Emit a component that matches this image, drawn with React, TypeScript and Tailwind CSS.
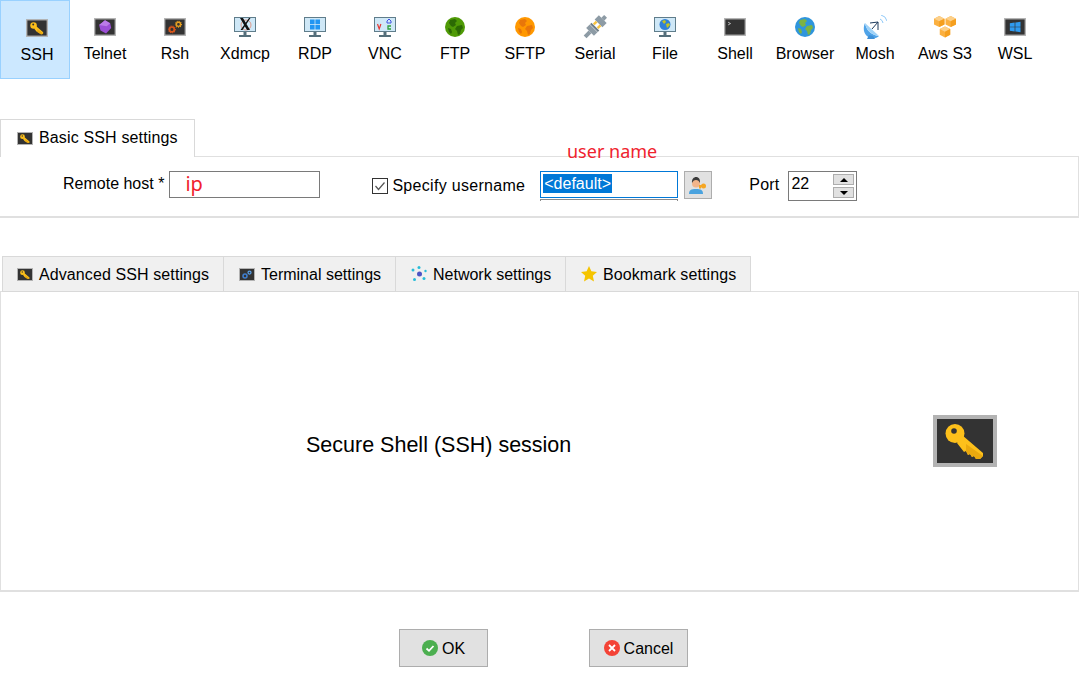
import type { ReactNode } from 'react';

type IconProps = { className?: string };

function DarkBox({ className, children }: IconProps & { children: ReactNode }) {
  return (
    <svg viewBox="0 0 64 52" className={className}>
      <rect x="2" y="2" width="60" height="48" fill="#333333" stroke="#b3b3b3" strokeWidth="4" />
      {children}
    </svg>
  );
}

function KeyIcon({ className }: IconProps) {
  return (
    <DarkBox className={className}>
      <circle cx="22" cy="18.500" r="9.500" fill="#fdc01b" />
      <path d="M29 20l21 18v3l-3 3h-4l-2-3-2 1-2-3-2 1-2-4-2 1-7-9z" fill="#fdc01b" />
      <path d="M33 29l17 12-3 3h-4l-2-3-2 1-2-3-2 1-2-4z" fill="#eaa90f" />
      <circle cx="21" cy="16" r="2.800" fill="#333333" />
    </DarkBox>
  );
}

function Monitor({ children }: { children?: ReactNode }) {
  return (
    <svg viewBox="0 0 22 20" className="w-[22px] h-[20px]">
      <rect x="0" y="0" width="22" height="15" fill="#607d8b" />
      <rect x="1" y="1" width="20" height="13" fill="#cfe8f7" />
      <rect x="9.500" y="15" width="3" height="3" fill="#546e7a" />
      <rect x="5" y="18" width="12" height="2" fill="#546e7a" />
      {children}
    </svg>
  );
}

function Globe({ sea, land }: { sea: string; land: string }) {
  return (
    <svg viewBox="0 0 20 20" className="w-[20px] h-[20px]">
      <circle cx="10" cy="10" r="10" fill={sea} />
      <path d="M5 3l5-1 2 2-2 2 1 2-3 2-2-1-2-3zM12 9l5-1 1 3-2 2-1 4-2 1-1-4-2-2zM3 11l3 1 1 3-1 2-2-2z" fill={land} />
    </svg>
  );
}

function WindowsLogo({ x, y, size, color }: { x: number; y: number; size: number; color: string }) {
  const c = size * 0.46;
  const gap = size * 0.54;
  return (
    <g fill={color}>
      <rect x={x} y={y} width={c} height={c} />
      <rect x={x + gap} y={y} width={c} height={c} />
      <rect x={x} y={y + gap} width={c} height={c} />
      <rect x={x + gap} y={y + gap} width={c} height={c} />
    </g>
  );
}

function Cube({ x, y }: { x: number; y: number }) {
  return (
    <g transform={`translate(${x} ${y})`}>
      <path d="M5 0l5 2.500v5.500l-5 2.500-5-2.500v-5.500z" fill="#fbb040" />
      <path d="M5 0l5 2.500-5 2.500-5-2.500z" fill="#fcd08a" />
      <path d="M5 5l5-2.500v5.500l-5 2.500z" fill="#f59f1f" />
    </g>
  );
}

const tools: { label: string; icon: ReactNode }[] = [
  { label: 'SSH', icon: <KeyIcon className="w-[22px] h-[18px]" /> },
  {
    label: 'Telnet',
    icon: (
      <DarkBox className="w-[22px] h-[18px]">
        <path d="M32 6l15 9 3 14-15 16-16-9-4-16z" fill="#9c4fd6" />
        <path d="M32 6l15 9-10 9-22-4z" fill="#bb7be8" />
      </DarkBox>
    ),
  },
  {
    label: 'Rsh',
    icon: (
      <DarkBox className="w-[22px] h-[18px]">
        <circle cx="23" cy="33" r="7" fill="none" stroke="#d8561b" strokeWidth="5" />
        <circle cx="23" cy="33" r="10" fill="none" stroke="#d8561b" strokeWidth="3" strokeDasharray="3 3" />
        <circle cx="42" cy="18" r="6" fill="none" stroke="#e8a01f" strokeWidth="4" />
        <circle cx="42" cy="18" r="9" fill="none" stroke="#e8a01f" strokeWidth="3" strokeDasharray="3 3" />
      </DarkBox>
    ),
  },
  {
    label: 'Xdmcp',
    icon: (
      <Monitor>
        <circle cx="12" cy="8" r="5" fill="none" stroke="#e2856e" strokeWidth="0.800" />
        <path d="M6 1h3l7 12h-3zM15 1h1.500l-8 12h-2z" fill="#111111" />
      </Monitor>
    ),
  },
  {
    label: 'RDP',
    icon: (
      <Monitor>
        <WindowsLogo x={6} y={2.500} size={10} color="#2196f3" />
      </Monitor>
    ),
  },
  {
    label: 'VNC',
    icon: (
      <Monitor>
        <path d="M3.500 7l1.700 5 1.700-5" fill="none" stroke="#e53935" strokeWidth="1.200" />
        <path d="M13 4l2-2 2 2v2h-4z" fill="none" stroke="#3f51e0" strokeWidth="1" />
        <path d="M17 9h-3v3h3" fill="none" stroke="#2e9e3a" strokeWidth="1.300" />
      </Monitor>
    ),
  },
  { label: 'FTP', icon: <Globe sea="#4f9a06" land="#2c6a04" /> },
  { label: 'SFTP', icon: <Globe sea="#ff9800" land="#e8760a" /> },
  {
    label: 'Serial',
    icon: (
      <svg viewBox="0 0 24 24" className="w-[24px] h-[24px]">
        <g transform="rotate(45 12 12)">
          <rect x="10" y="-3" width="4" height="4" fill="#8d9ba5" />
          <rect x="6.500" y="1" width="11" height="6" fill="#8d9ba5" />
          <rect x="8" y="7" width="2.500" height="4" fill="#f9c440" />
          <rect x="13.500" y="7" width="2.500" height="4" fill="#f9c440" />
          <rect x="6.500" y="11.500" width="11" height="2" fill="#6f7d87" />
          <rect x="6.500" y="14" width="11" height="5" fill="#8d9ba5" />
          <rect x="10" y="19" width="4" height="7" fill="#8d9ba5" />
        </g>
      </svg>
    ),
  },
  {
    label: 'File',
    icon: (
      <Monitor>
        <circle cx="11" cy="7.500" r="5.500" fill="#2f80d8" />
        <path d="M8 4l3-1 1 2-2 2zM12 7l3-1 1 2-3 3z" fill="#c4c41f" />
      </Monitor>
    ),
  },
  {
    label: 'Shell',
    icon: (
      <DarkBox className="w-[22px] h-[18px]">
        <path d="M12 12l7 4-7 4" fill="none" stroke="#d0d0d0" strokeWidth="2.500" />
      </DarkBox>
    ),
  },
  { label: 'Browser', icon: <Globe sea="#2f95dc" land="#7cb342" /> },
  {
    label: 'Mosh',
    icon: (
      <svg viewBox="0 0 24 24" className="w-[24px] h-[24px]">
        <path d="M2 8c1 7 6 12 14 13-4 4-13 3-15-5-.500-3 0-6 1-8z" fill="#4fa3e8" />
        <path d="M2 8l14 13C8 20 3 15 2 8z" fill="#9fd2f7" />
        <path d="M6 20l-2 4h8l-2-3z" fill="#3f8fd6" />
        <path d="M9 14l6-7M7 8l8-1v8" fill="none" stroke="#1d3a5c" strokeWidth="1" />
        <path d="M17 4a5 5 0 0 1 3 4M18 0a8 8 0 0 1 6 6" fill="none" stroke="#90caf9" strokeWidth="1" />
      </svg>
    ),
  },
  {
    label: 'Aws S3',
    icon: (
      <svg viewBox="0 0 22 21" className="w-[23px] h-[22px]">
        <Cube x={0} y={0} />
        <Cube x={11} y={0} />
        <Cube x={5.500} y={10} />
      </svg>
    ),
  },
  {
    label: 'WSL',
    icon: (
      <DarkBox className="w-[22px] h-[18px]">
        <path d="M17 15l14-2v12H17zM33 13l15-2v14H33zM17 27h14v12l-14-2zM33 27h15v14l-15-2z" fill="#2f9bf0" />
      </DarkBox>
    ),
  },
];

function GearsSmall() {
  return (
    <DarkBox className="w-[16px] h-[13px]">
      <circle cx="24" cy="32" r="8" fill="none" stroke="#3f7fd0" strokeWidth="6" />
      <circle cx="42" cy="18" r="6" fill="none" stroke="#5aa0e8" strokeWidth="5" />
    </DarkBox>
  );
}

function NetworkIcon() {
  return (
    <svg viewBox="0 0 16 16" className="w-[16px] h-[16px]">
      <circle cx="8.500" cy="8" r="2.500" fill="#4b55c4" />
      <g fill="#27bcd8">
        <circle cx="8" cy="1.500" r="1.500" />
        <circle cx="2" cy="4" r="1.500" />
        <circle cx="14.500" cy="5" r="1.200" />
        <circle cx="3.500" cy="13.500" r="1.500" />
        <circle cx="13" cy="12.500" r="1.500" />
      </g>
    </svg>
  );
}

function StarIcon() {
  return (
    <svg viewBox="0 0 16 16" className="w-[16px] h-[16px]">
      <path d="M8 0l2.400 5.300 5.600.600-4.200 3.800 1.200 5.800L8 12.600l-5 2.900 1.200-5.800L0 5.900l5.600-.600z" fill="#f5c400" />
    </svg>
  );
}

function UserKeyIcon() {
  return (
    <svg viewBox="0 0 18 17" className="w-[18px] h-[17px]">
      <path d="M0 17c0-4 2-5 7-5s7 1 7 5z" fill="#4aa3df" />
      <circle cx="7" cy="6.500" r="4" fill="#f2b48a" />
      <path d="M3 6c-.500-4 2-6 4-6s4.500 1.500 4 6c-1-2-2-3-4-3s-3 1-4 3z" fill="#3b3b3b" />
      <circle cx="14.500" cy="9" r="2.500" fill="#f5a623" />
      <path d="M10 8h3v2h-1v1.500h-2z" fill="#f5a623" />
    </svg>
  );
}

function SpinArrow({ down }: { down?: boolean }) {
  return (
    <div className="w-[21px] h-[11px] bg-[#e1e1e1] border border-[#adadad] flex items-center justify-center">
      <div
        className={
          down
            ? 'w-0 h-0 border-x-[4px] border-x-transparent border-t-[4px] border-t-black'
            : 'w-0 h-0 border-x-[4px] border-x-transparent border-b-[4px] border-b-black'
        }
      />
    </div>
  );
}

function LowerTab({ icon, label, className, wide }: { icon: ReactNode; label: string; className: string; wide?: boolean }) {
  return (
    <div className={`${className} h-[36px] bg-[#f0f0f0] border border-[#d9d9d9] flex items-center gap-[6px]`}>
      <div className="w-[16px] flex justify-center">{icon}</div>
      <span className={wide ? 'mt-[2px] tracking-[0.1px]' : 'mt-[2px]'}>{label}</span>
    </div>
  );
}

export default function App() {
  return (
    <div className="relative w-[1080px] h-[681px] overflow-hidden bg-white text-[16px] text-black font-['Liberation_Sans',Arial,sans-serif]">
      <div className="flex h-[79px]">
        {tools.map((tool, i) => (
          <div
            key={tool.label}
            className={
              i === 0
                ? 'w-[70px] h-[79px] bg-[#cce8ff] border border-[#99d1ff] flex flex-col items-center pt-[16px] pl-[4px]'
                : 'w-[70px] h-[79px] flex flex-col items-center pt-[16px]'
            }
          >
            <div className="h-[22px] flex items-center justify-center">{tool.icon}</div>
            <span className="mt-[6px] leading-[20px] whitespace-nowrap">{tool.label}</span>
          </div>
        ))}
      </div>

      <div className="mt-[40px] relative z-10 w-[195px] h-[38px] -mb-px bg-white border border-b-0 border-[#d9d9d9] flex items-center pl-[16px] gap-[6px]">
        <KeyIcon className="w-[16px] h-[13px]" />
        <span className="-mt-[2px] tracking-[0.15px]">Basic SSH settings</span>
      </div>
      <div className="w-[1079px] h-[62px] border-2 border-t border-r border-l-0 border-[#e0e0e0] flex items-start pt-[14px] pl-[63px]">
        <span className="mt-[3px] leading-[20px]">Remote host *</span>
        <div className="ml-[5px] w-[151px] h-[27px] border border-[#7a7a7a] pl-[15px] text-[#f0222e] text-[20px] leading-[24px] font-['Noto_Sans',sans-serif]">
          ip
        </div>
        <div className="ml-[52px] mt-[7px] w-[16px] h-[16px] border border-[#333333] flex items-center justify-center">
          <svg viewBox="0 0 14 14" className="w-[14px] h-[14px]">
            <path d="M2.500 7l3 3.500 6-7" fill="none" stroke="#555555" strokeWidth="1.200" />
          </svg>
        </div>
        <span className="ml-[4px] mt-[5px] leading-[20px] tracking-[0.3px]">Specify username</span>
        <div className="ml-[15px] w-[138px] h-[30px] relative">
          <div className="h-[27px] border border-[#0078d7] pl-[2px] pt-[2px]">
            <span className="block w-fit h-[19px] leading-[19px] px-px bg-[#0078d7] text-white">&lt;default&gt;</span>
          </div>
          <div className="mt-[1px] h-[2px] border-x border-t border-[#8a8a8a]" />
        </div>
        <div className="ml-[6px] w-[28px] h-[28px] bg-[#e1e1e1] border border-[#adadad] flex items-center justify-center">
          <UserKeyIcon />
        </div>
        <span className="ml-[37px] mt-[4px] leading-[20px] tracking-[0.2px]">Port</span>
        <div className="ml-[9px] w-[69px] h-[30px] border border-[#7a7a7a] flex justify-between pl-[2px] pr-[2px] pt-[2px]">
          <span className="leading-[20px]">22</span>
          <div className="flex flex-col gap-[2px]">
            <SpinArrow />
            <SpinArrow down />
          </div>
        </div>
      </div>

      <div className="mt-[38px] ml-[2px] flex">
        <LowerTab wide className="w-[222px] pl-[14px]" icon={<KeyIcon className="w-[16px] h-[13px]" />} label="Advanced SSH settings" />
        <LowerTab className="w-[172px] pl-[15px] border-l-0" icon={<GearsSmall />} label="Terminal settings" />
        <LowerTab className="w-[170px] pl-[15px] border-l-0" icon={<NetworkIcon />} label="Network settings" />
        <LowerTab wide className="w-[185px] pl-[15px] border-l-0" icon={<StarIcon />} label="Bookmark settings" />
      </div>
      <div className="-mt-px w-[1079px] h-[301px] border border-b-2 border-[#e0e0e0] flex items-start">
        <span className="ml-[305px] mt-[140px] text-[21.5px] leading-[26px] whitespace-nowrap">Secure Shell (SSH) session</span>
        <KeyIcon className="ml-[362px] mt-[123px] w-[64px] h-[52px]" />
      </div>

      <div className="mt-[37px] ml-[399px] flex gap-[101px]">
        <div className="w-[89px] h-[38px] bg-[#e1e1e1] border border-[#adadad] flex items-center justify-center gap-[4px]">
          <svg viewBox="0 0 16 16" className="w-[16px] h-[16px]">
            <circle cx="8" cy="8" r="8" fill="#4caf50" />
            <path d="M4.500 8.500l2.500 2.300 4.500-4.800" fill="none" stroke="#ffffff" strokeWidth="1.800" />
          </svg>
          <span className="mt-[1px]">OK</span>
        </div>
        <div className="w-[99px] h-[38px] bg-[#e1e1e1] border border-[#adadad] flex items-center justify-center gap-[4px]">
          <svg viewBox="0 0 16 16" className="w-[16px] h-[16px]">
            <circle cx="8" cy="8" r="8" fill="#f44336" />
            <path d="M5 5l6 6M11 5l-6 6" fill="none" stroke="#ffffff" strokeWidth="1.800" />
          </svg>
          <span className="mt-[1px]">Cancel</span>
        </div>
      </div>

      {/* red note typed over the screenshot */}
      <span className="absolute left-[567px] top-[139px] z-20 text-[18px] leading-[24px] text-[#f0222e] font-['Noto_Sans',sans-serif]">user name</span>
    </div>
  );
}
